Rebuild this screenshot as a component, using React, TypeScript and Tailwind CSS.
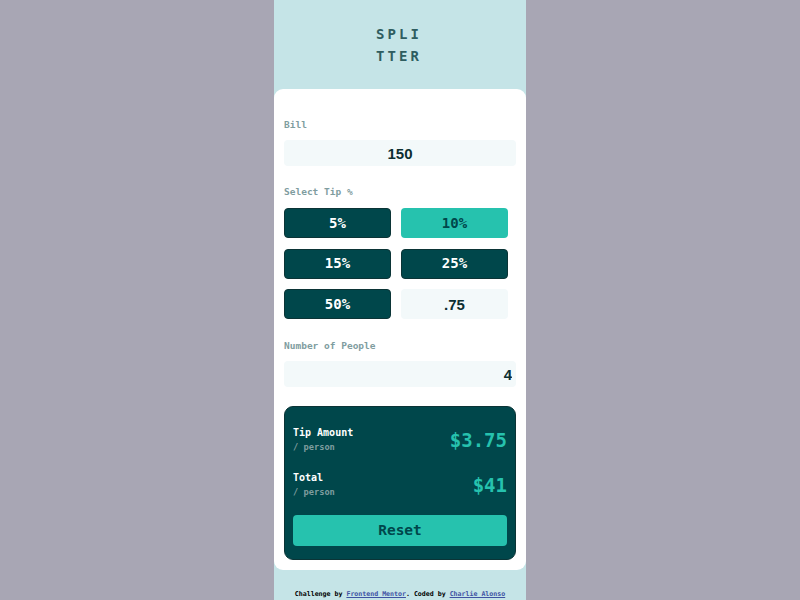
import { useState } from 'react';

const tips = [5, 10, 15, 25, 50];

const App = () => {
    const [bill, setBill] = useState("150");
    const [tip, setTip] = useState(10);
    const [custom, setCustom] = useState(".75");
    const [people, setPeople] = useState("4");

    return (
        <div className="min-h-screen bg-[#a8a6b4] flex justify-center font-['DejaVu_Sans_Mono',monospace]">
            <div className="w-[252px] min-h-screen bg-[#c5e4e7] flex flex-col">

                {/* Logo */}
                <h1 className="pt-[23px] mb-[22px] text-center text-[14px] leading-[22px] font-bold tracking-[0.22em] text-[#2f5d60] pr-[2px]">
                    SPLI<br />TTER
                </h1>

                {/* Calculator card */}
                <main className="bg-white rounded-[9px] px-[10px] pt-[31px] pb-[10px]">
                    <label className="block text-[9.5px] leading-[10px] font-bold text-[#7f9d9f]">Bill</label>
                    <input
                        value={bill}
                        onChange={(e) => setBill(e.target.value)}
                        className="mt-[10px] w-full h-[26px] rounded-[4px] bg-[#f3f9fa] text-center text-[15px] font-bold text-[#0d2f31] font-['Liberation_Sans',Arial,sans-serif] outline-none"
                    />

                    <label className="block mt-[21px] text-[9.5px] leading-[10px] font-bold text-[#7f9d9f]">Select Tip %</label>
                    <div className="mt-[11px] grid grid-cols-[107px_107px] gap-x-[10px] gap-y-[10.5px]">
                        {tips.map((t) => (
                            <button
                                key={t}
                                onClick={() => setTip(t)}
                                className={
                                    t === tip
                                        ? "h-[30px] rounded-[4px] bg-[#26c2ae] text-[#00474b] text-[14px] font-bold"
                                        : "h-[30px] rounded-[4px] bg-[#00474b] border border-[#0b3436] text-white text-[14px] font-bold"
                                }
                            >
                                {t}%
                            </button>
                        ))}
                        <input
                            value={custom}
                            onChange={(e) => setCustom(e.target.value)}
                            className="h-[30px] w-full rounded-[4px] bg-[#f3f9fa] text-center text-[15px] font-bold text-[#0d2f31] font-['Liberation_Sans',Arial,sans-serif] outline-none"
                        />
                    </div>

                    <label className="block mt-[22px] text-[9.5px] leading-[10px] font-bold text-[#7f9d9f]">Number of People</label>
                    <input
                        value={people}
                        onChange={(e) => setPeople(e.target.value)}
                        className="mt-[10px] w-full h-[26px] rounded-[4px] bg-[#f3f9fa] text-right pr-[4px] text-[15px] font-bold text-[#0d2f31] font-['Liberation_Sans',Arial,sans-serif] outline-none"
                    />

                    {/* Results */}
                    <section className="mt-[19px] bg-[#00474b] border border-[#0b3436] rounded-[9px] px-[8px] pt-[20px] pb-[13px]">
                        <div className="flex items-center justify-between">
                            <div>
                                <p className="text-[10px] leading-[12px] font-bold text-white">Tip Amount</p>
                                <p className="mt-[3px] text-[8.7px] leading-[10px] font-bold text-[#7f9d9f]">/ person</p>
                            </div>
                            <p className="text-[19px] leading-[24px] font-bold text-[#26c2ae]">$3.75</p>
                        </div>
                        <div className="mt-[20px] flex items-center justify-between">
                            <div>
                                <p className="text-[10px] leading-[12px] font-bold text-white">Total</p>
                                <p className="mt-[3px] text-[8.7px] leading-[10px] font-bold text-[#7f9d9f]">/ person</p>
                            </div>
                            <p className="text-[19px] leading-[24px] font-bold text-[#26c2ae]">$41</p>
                        </div>
                        <button className="mt-[18px] w-full h-[31px] rounded-[4px] bg-[#26c2ae] text-[#00474b] text-[14.5px] font-bold">
                            Reset
                        </button>
                    </section>
                </main>

                <footer className="mt-[20px] pb-[2px] text-center text-[6.6px] leading-[8px] font-bold text-black whitespace-nowrap">
                    Challenge by <a href="#" className="text-[#3e52a3] underline">Frontend Mentor</a>. Coded by <a href="#" className="text-[#3e52a3] underline">Charlie Alonso</a>
                </footer>
            </div>
        </div>
    );
};

export default App;
